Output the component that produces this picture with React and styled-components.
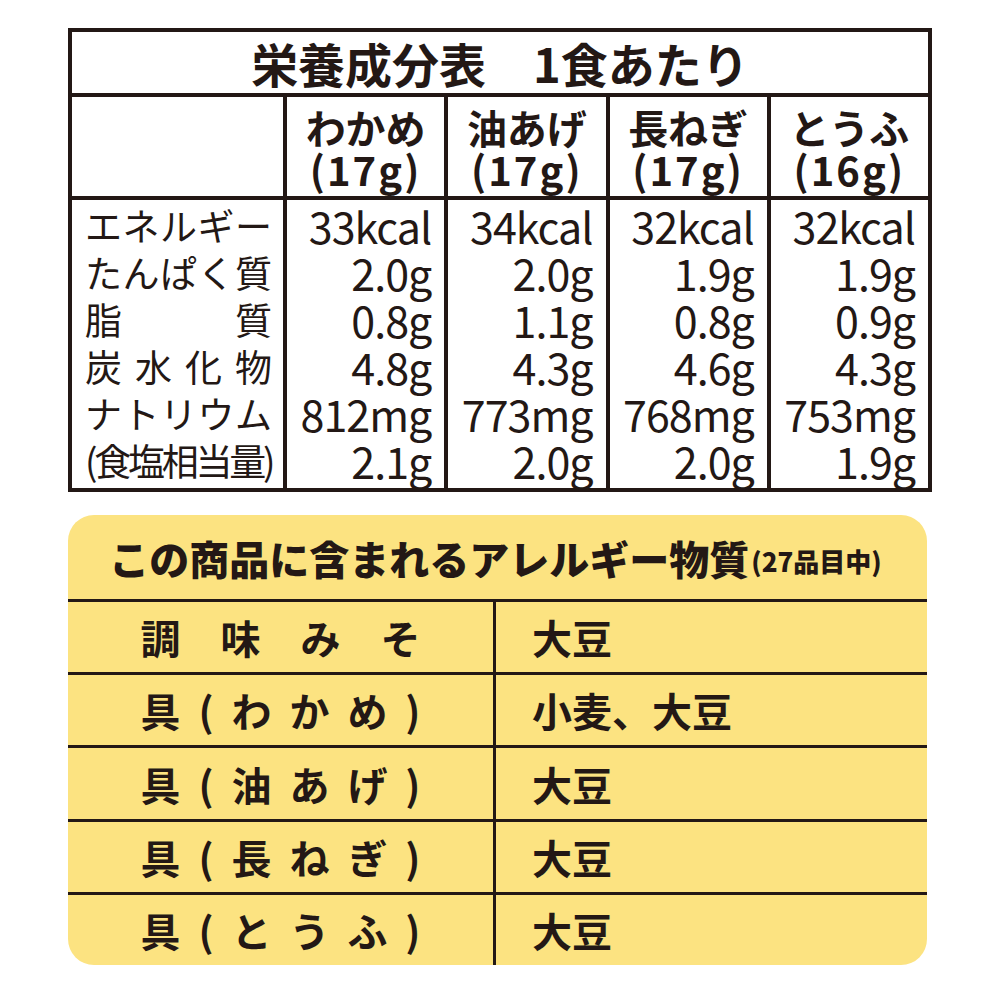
import React from "react";
import styled, { createGlobalStyle } from "styled-components";

const INK = "#231815";
const YELLOW = "#fce381";
const JP = `"Noto Sans CJK JP", "Noto Sans", sans-serif`;

const Global = createGlobalStyle`
  html, body { margin: 0; padding: 0; background: #fff; }
  body { font-family: ${JP}; color: ${INK}; }
`;

const Page = styled.div`
  width: 1000px;
  height: 1000px;
  padding: 28px 0 0 68px;
  box-sizing: border-box;
  display: flex;
  flex-direction: column;
  gap: 23px;
`;

/* ---------- Nutrition table ---------- */
const Nutrition = styled.div`
  width: 864px;
  box-sizing: border-box;
  background: ${INK};
  padding: 4px;
  display: grid;
  grid-template-columns: 211px repeat(4, 1fr);
  grid-template-rows: 61px 99px 288px;
  gap: 4px;
`;

const Cell = styled.div`
  background: #fff;
  min-width: 0;
`;

const TitleCell = styled(Cell)`
  grid-column: 1 / -1;
  display: flex;
  align-items: center;
  justify-content: center;
  font-size: 47px;
  font-weight: 700;
  line-height: 1;
`;

const HeadCell = styled(Cell)`
  display: flex;
  flex-direction: column;
  align-items: center;
  justify-content: center;
  font-size: 40px;
  font-weight: 700;
  line-height: 42px;
  padding-top: 2px;
`;

const Weight = styled.span`
  letter-spacing: 2px;
`;

const LabelCol = styled(Cell)`
  padding: 2px 11px 0 13px;
  display: flex;
  flex-direction: column;
`;

const Label = styled.div`
  font-size: 37px;
  line-height: 47px;
  height: 47px;
  font-weight: 400;
  text-align: justify;
  text-align-last: justify;
  letter-spacing: ${(p) => (p.$tight ? "-3.5px" : "0")};
  white-space: nowrap;
`;

const ValueCol = styled(Cell)`
  padding: 2px 13px 0 0;
  display: flex;
  flex-direction: column;
  align-items: flex-end;
`;

const Value = styled.div`
  font-size: 43px;
  line-height: 47px;
  height: 47px;
  font-weight: 400;
  letter-spacing: -1px;
  white-space: nowrap;
`;

/* ---------- Allergy box ---------- */
const Allergy = styled.div`
  width: 859px;
  height: 450px;
  background: ${YELLOW};
  border-radius: 26px;
  overflow: hidden;
  display: flex;
  flex-direction: column;
`;

const AllergyTitle = styled.div`
  height: 84px;
  display: flex;
  align-items: center;
  justify-content: center;
  font-size: 40px;
  font-weight: 900;
  line-height: 1;
  padding-top: 2px;
  padding-right: 4px;
  box-sizing: border-box;
`;

const Small = styled.span`
  font-size: 26px;
  font-weight: 900;
  margin-left: 2px;
  align-self: flex-end;
  margin-bottom: 25px;
`;

const AllergyRow = styled.div`
  flex: 1;
  display: grid;
  grid-template-columns: 428px 1fr;
  border-top: 3px solid ${INK};
`;

const ItemCell = styled.div`
  border-right: 3px solid ${INK};
  display: flex;
  align-items: center;
  justify-content: center;
`;

const ItemName = styled.div`
  width: 280px;
  font-size: 40px;
  font-weight: 700;
  line-height: 1;
  text-align: justify;
  text-align-last: justify;
  white-space: nowrap;
`;

const AllergenCell = styled.div`
  display: flex;
  align-items: center;
  padding-left: 36px;
  font-size: 40px;
  font-weight: 700;
  line-height: 1;
`;

const labels = [
  { t: "エネルギー" },
  { t: "たんぱく質" },
  { t: "脂質" },
  { t: "炭水化物" },
  { t: "ナトリウム" },
  { t: "(食塩相当量)", tight: true },
];

const columns = [
  { name: "わかめ", w: "(17g)", v: ["33kcal", "2.0g", "0.8g", "4.8g", "812mg", "2.1g"] },
  { name: "油あげ", w: "(17g)", v: ["34kcal", "2.0g", "1.1g", "4.3g", "773mg", "2.0g"] },
  { name: "長ねぎ", w: "(17g)", v: ["32kcal", "1.9g", "0.8g", "4.6g", "768mg", "2.0g"] },
  { name: "とうふ", w: "(16g)", v: ["32kcal", "1.9g", "0.9g", "4.3g", "753mg", "1.9g"] },
];

const allergies = [
  ["調味みそ", "大豆"],
  ["具(わかめ)", "小麦、大豆"],
  ["具(油あげ)", "大豆"],
  ["具(長ねぎ)", "大豆"],
  ["具(とうふ)", "大豆"],
];

export default function App() {
  return (
    <>
      <Global />
      <Page>
        <Nutrition>
          <TitleCell>栄養成分表　1食あたり</TitleCell>
          <Cell />
          {columns.map((c) => (
            <HeadCell key={c.name}>
              <span>{c.name}</span>
              <Weight>{c.w}</Weight>
            </HeadCell>
          ))}
          <LabelCol>
            {labels.map((l) => (
              <Label key={l.t} $tight={l.tight}>
                {l.t}
              </Label>
            ))}
          </LabelCol>
          {columns.map((c) => (
            <ValueCol key={c.name}>
              {c.v.map((v, i) => (
                <Value key={i}>{v}</Value>
              ))}
            </ValueCol>
          ))}
        </Nutrition>

        <Allergy>
          <AllergyTitle>
            この商品に含まれるアレルギー物質<Small>(27品目中)</Small>
          </AllergyTitle>
          {allergies.map(([item, al]) => (
            <AllergyRow key={item}>
              <ItemCell>
                <ItemName>{item}</ItemName>
              </ItemCell>
              <AllergenCell>{al}</AllergenCell>
            </AllergyRow>
          ))}
        </Allergy>
      </Page>
    </>
  );
}
